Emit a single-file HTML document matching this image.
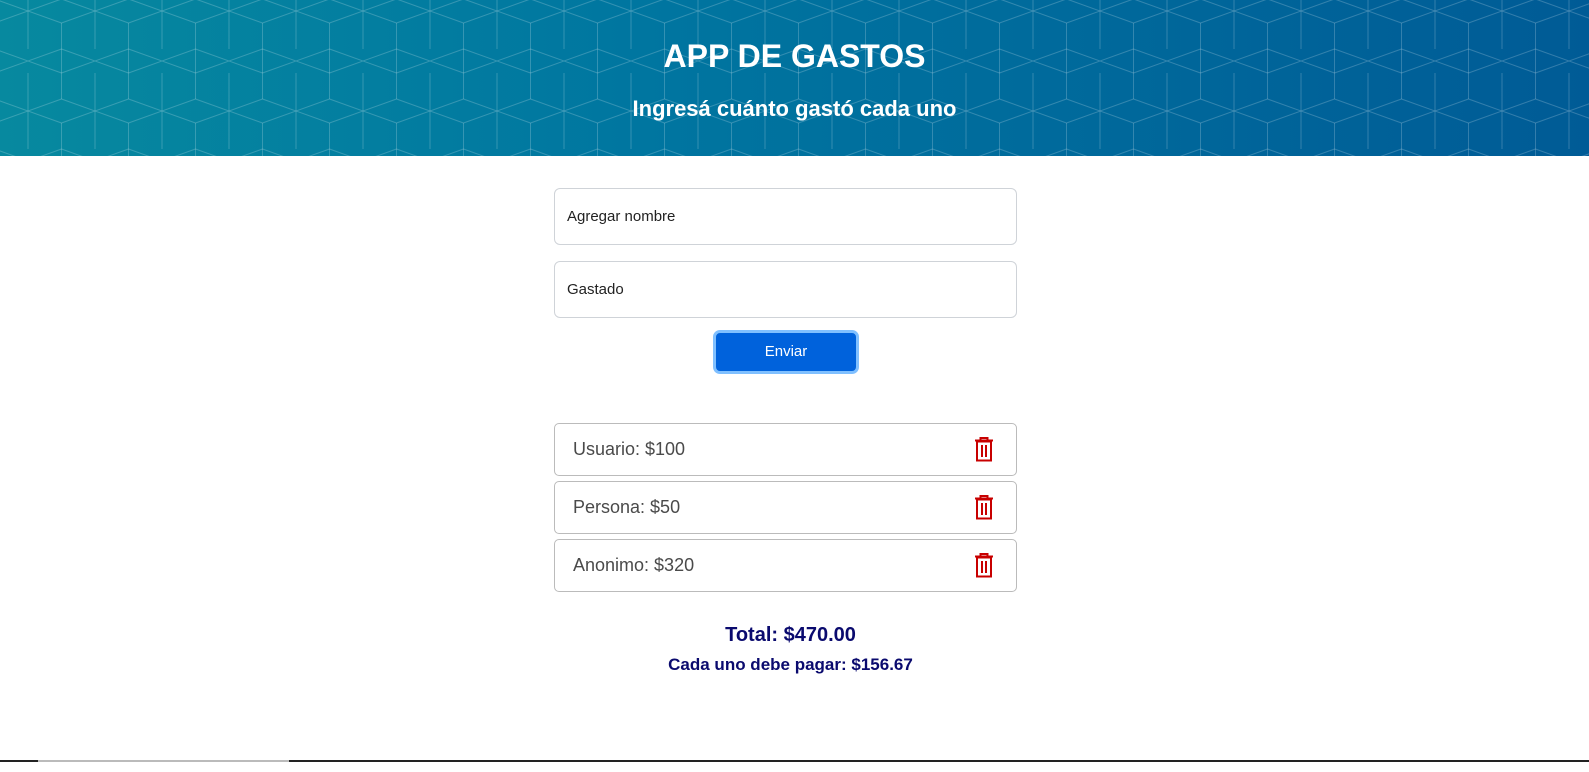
<!DOCTYPE html>
<html><head><meta charset="utf-8"><style>
*{box-sizing:border-box;margin:0;padding:0}
body{width:1589px;height:772px;background:#fff;font-family:"Liberation Sans",sans-serif;position:relative;overflow:hidden}
header{position:absolute;left:0;top:0;width:1589px;height:156px;background:linear-gradient(90deg,#07899f 0%,#0076a0 40%,#005b96 100%);overflow:hidden}
header svg{position:absolute;left:0;top:0}
h1{position:absolute;top:38px;width:100%;text-align:center;color:#fff;font-size:32px;font-weight:bold}
h2{position:absolute;top:96px;width:100%;text-align:center;color:#fff;font-size:22px;font-weight:bold}
.inp{position:absolute;left:554px;width:463px;height:57px;border:1px solid #cfd3d8;border-radius:6px;font-size:15px;color:#222;padding:19px 12px}
.btn{position:absolute;left:713px;top:330px;width:146px;height:44px;border:3px solid #80c0ff;border-radius:7px;background:#0062dc;color:#fff;font-size:15px;text-align:center;line-height:38px}
.item{position:absolute;left:554px;width:463px;height:53px;border:1px solid #bbb;border-radius:5px;font-size:18px;color:#4a4a4a;padding:15px 18px}
.item svg{position:absolute;right:22px;top:13px}
.t{position:absolute;width:100%;left:-4px;text-align:center;color:#0a0a6e;font-weight:bold}
.bar{position:absolute;top:760px;height:2px}
</style></head><body>
<header>
<svg width="1589" height="156"><defs><pattern id="p" width="67" height="100" patternUnits="userSpaceOnUse" patternTransform="translate(28,11)">
<g stroke="rgba(255,255,255,0.2)" stroke-width="1" fill="none">
<path d="M-33.5,-12 L33.5,12 M-33.5,12 L33.5,-12 M33.5,-12 L100.5,12 M33.5,12 L100.5,-12"/>
<path d="M-33.5,38 L33.5,62 M-33.5,62 L33.5,38 M33.5,38 L100.5,62 M33.5,62 L100.5,38"/>
<path d="M-33.5,88 L33.5,112 M-33.5,112 L33.5,88 M33.5,88 L100.5,112 M33.5,112 L100.5,88"/>
<path d="M0,-38 V38 M67,-38 V38 M0,62 V138 M67,62 V138 M33.5,12 V88"/>
</g></pattern></defs><rect width="1589" height="156" fill="url(#p)"/></svg>
<h1>APP DE GASTOS</h1>
<h2>Ingresá cuánto gastó cada uno</h2>
</header>
<div class="inp" style="top:188px">Agregar nombre</div>
<div class="inp" style="top:261px">Gastado</div>
<div class="btn">Enviar</div>
<div class="item" style="top:423px">Usuario: $100<svg width="20" height="25" viewBox="0 0 20 25"><path d="M1,3.5 H19 M6.5,3.5 V1 H13.5 V3.5 M3,4.5 H17 V23.5 H3 Z M8,8 V20 M12,8 V20" stroke="#c80000" stroke-width="2" fill="none"/></svg></div>
<div class="item" style="top:481px">Persona: $50<svg width="20" height="25" viewBox="0 0 20 25"><path d="M1,3.5 H19 M6.5,3.5 V1 H13.5 V3.5 M3,4.5 H17 V23.5 H3 Z M8,8 V20 M12,8 V20" stroke="#c80000" stroke-width="2" fill="none"/></svg></div>
<div class="item" style="top:539px">Anonimo: $320<svg width="20" height="25" viewBox="0 0 20 25"><path d="M1,3.5 H19 M6.5,3.5 V1 H13.5 V3.5 M3,4.5 H17 V23.5 H3 Z M8,8 V20 M12,8 V20" stroke="#c80000" stroke-width="2" fill="none"/></svg></div>
<div class="t" style="top:624px;font-size:20px">Total: $470.00</div>
<div class="t" style="top:655px;font-size:17px">Cada uno debe pagar: $156.67</div>
<div class="bar" style="left:0;width:38px;background:#222"></div>
<div class="bar" style="left:38px;width:251px;background:#bbb"></div>
<div class="bar" style="left:289px;width:1300px;background:#222"></div>
</body></html>
